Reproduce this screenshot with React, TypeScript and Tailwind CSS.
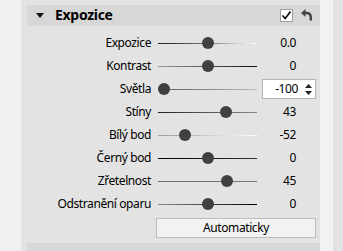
import React from "react";

type Row = { label: string; pos: number; value: string; track: string; spin?: boolean };

const rows: Row[] = [
  { label: "Expozice", pos: 0, value: "0.0", track: "linear-gradient(to right,#1a1a1a,#7a7a7a 50%,#ffffff)" },
  { label: "Kontrast", pos: 0, value: "0", track: "linear-gradient(to right,#9a9a9a,#111111)" },
  { label: "Světla", pos: -100, value: "-100", track: "linear-gradient(to right,#5a5a5a,#bdbdbd)", spin: true },
  { label: "Stíny", pos: 43, value: "43", track: "linear-gradient(to right,#222222,#8a8a8a)" },
  { label: "Bílý bod", pos: -52, value: "-52", track: "linear-gradient(to right,#9a9a9a,#ffffff)" },
  { label: "Černý bod", pos: 0, value: "0", track: "linear-gradient(to right,#000000,#333333)" },
  { label: "Zřetelnost", pos: 45, value: "45", track: "linear-gradient(to right,#6e6e6e,#7a7a7a)" },
  { label: "Odstranění oparu", pos: 0, value: "0", track: "linear-gradient(to right,#8a8a8a,#000000)" },
];

function Slider({ pos, track }: { pos: number; track: string }) {
  const left = 6 + ((pos + 100) / 200) * 87;
  return (
    <div className="relative w-[99px] h-[23px] flex items-center">
      <div className="w-full h-[1px]" style={{ background: track }} />
      <div
        className="absolute top-1/2 w-[12px] h-[12px] rounded-full bg-[#404040]"
        style={{ left: left - 6, transform: "translateY(-50%)" }}
      />
    </div>
  );
}

export default function App() {
  return (
    <div
      className="w-[343px] h-[251px] flex bg-[#f0f0f0] overflow-hidden text-[12px] text-black tracking-[-0.4px]"
      style={{ fontFamily: '"Noto Sans", "Open Sans", sans-serif' }}
    >
      <div className="w-[21px] shrink-0 bg-[#f0f0f0]" />
      <div className="w-[299px] shrink-0 bg-[#e3e3e3] pl-[6px] pt-[5px] flex flex-col">
        <div className="h-[25px] bg-[#d7d7d7] flex items-center">
          <svg width="8" height="5" viewBox="0 0 8 5" className="ml-[9px]">
            <path d="M0 0 L8 0 L4 5 Z" fill="#111" />
          </svg>
          <span className="ml-[11px] font-bold text-[14px] leading-none tracking-[-0.3px]">Expozice</span>
          <div className="ml-auto w-[13px] h-[13px] bg-white border border-[#a0a0a0] flex items-center justify-center">
            <svg width="11" height="11" viewBox="0 0 11 11">
              <path d="M1.5 5.5 L4.2 8.5 L9.5 1.5" stroke="#000" strokeWidth="1.6" fill="none" />
            </svg>
          </div>
          <svg width="11" height="12" viewBox="0 0 11 12" className="ml-[8px] mr-[8px]">
            <path d="M0 4 L4.5 0 L4.5 8 Z" fill="#444" />
            <path d="M4 4 H5.5 C8.5 4 9.8 6 9.8 8.5 L9.8 11.5" stroke="#444" strokeWidth="2.4" fill="none" />
          </svg>
        </div>
        <div className="pt-[6px] flex flex-col">
          {rows.map((r) => (
            <div key={r.label} className="h-[23px] flex items-center">
              <div className="w-[124px] text-right leading-none">{r.label}</div>
              <div className="ml-[7px]">
                <Slider pos={r.pos} track={r.track} />
              </div>
              {r.spin ? (
                <div className="ml-[5px] w-[54px] h-[20px] bg-white border border-[#b4b4b4] flex items-center">
                  <span className="flex-1 text-right pr-[3px] leading-none">{r.value}</span>
                  <div className="w-[14px] flex flex-col items-center gap-[3px]">
                    <svg width="7" height="4" viewBox="0 0 7 4"><path d="M0 4 L3.5 0 L7 4 Z" fill="#222" /></svg>
                    <svg width="7" height="4" viewBox="0 0 7 4"><path d="M0 0 L3.5 4 L7 0 Z" fill="#222" /></svg>
                  </div>
                </div>
              ) : (
                <div className="w-[39px] text-right leading-none">{r.value}</div>
              )}
            </div>
          ))}
        </div>
        <div className="mt-[2px] ml-[129px] w-[160px] h-[24px] bg-[#f2f2f2] border border-[#bdbdbd] flex items-center justify-center">
          Automaticky
        </div>
        <div className="mt-[5px] h-[10px] bg-[#d7d7d7]" />
      </div>
      <div className="w-[13px] shrink-0 bg-[#f2f2f2]" />
      <div className="flex-1 bg-[#e3e3e3]" />
    </div>
  );
}
